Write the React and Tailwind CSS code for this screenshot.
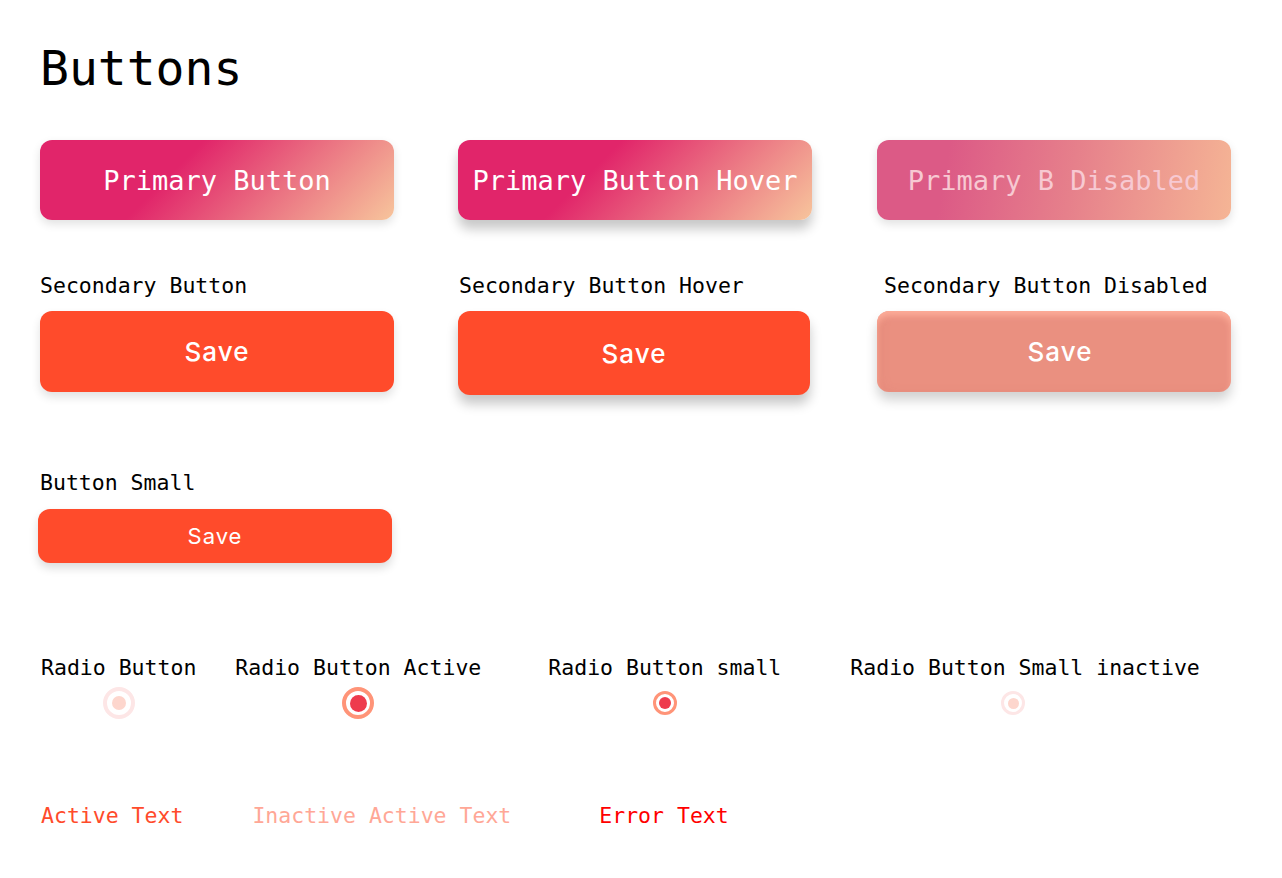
import React from "react";

const mono = "font-['DejaVu_Sans_Mono','Liberation_Mono',monospace]";
const sans = "font-['Inter','Open_Sans',sans-serif]";

const Label = ({ children, className = "" }) => (
  <p className={`${mono} text-[21.5px] leading-[22px] text-black ${className}`}>{children}</p>
);

const PrimaryButton = ({ children, variant }) => {
  const styles = {
    normal:
      "bg-[linear-gradient(135deg,#e1256a_38%,#ea6f81_66%,#f7c59c_100%)] text-white shadow-[0_4px_10px_rgba(0,0,0,0.12)]",
    hover:
      "bg-[linear-gradient(135deg,#e1256a_38%,#ea6f81_66%,#f7c59c_100%)] text-white shadow-[0_9px_12px_rgba(0,0,0,0.22)]",
    disabled:
      "bg-[linear-gradient(100deg,#dc5a86_20%,#e6808b_55%,#f5b595_100%)] text-[#f7c9d2] shadow-[0_4px_10px_rgba(0,0,0,0.12)]",
  };
  return (
    <button
      className={`${mono} ${styles[variant]} flex h-[80px] w-[354px] items-center justify-center rounded-[12px] pt-[2px] text-[27px] whitespace-nowrap`}
    >
      {children}
    </button>
  );
};

const SecondaryButton = ({ variant }) => {
  const styles = {
    normal: "h-[81px] w-[354px] bg-[#ff4b2b] shadow-[0_5px_10px_rgba(0,0,0,0.12)]",
    hover: "h-[84px] w-[352px] bg-[#ff4b2b] shadow-[0_9px_12px_rgba(0,0,0,0.22)]",
    disabled:
      "h-[81px] w-[354px] bg-[#ea9080] pl-[12px] shadow-[inset_0_5px_6px_rgba(255,175,155,0.9),inset_5px_0_8px_rgba(215,120,105,0.2),0_8px_12px_rgba(0,0,0,0.18)]",
  };
  return (
    <button
      className={`${sans} ${styles[variant]} flex items-center justify-center rounded-[12px] text-[26px] font-medium tracking-[1px] text-white`}
    >
      Save
    </button>
  );
};

const Radio = ({ active, small }) => {
  const outer = small ? "h-[24px] w-[24px] border-[3px]" : "h-[32px] w-[32px] border-[4px]";
  const ring = active ? "border-[#ff9478]" : "border-[#fde6e6]";
  const dot = small
    ? active
      ? "h-[12px] w-[12px]"
      : "h-[11px] w-[11px]"
    : active
    ? "h-[17px] w-[17px]"
    : "h-[14px] w-[14px]";
  const dotColor = active ? "bg-[#ee3b4d]" : "bg-[#fdd6cd]";
  return (
    <div className={`${outer} ${ring} flex items-center justify-center rounded-full bg-white`}>
      <div className={`${dot} ${dotColor} rounded-full`} />
    </div>
  );
};

export default function App() {
  return (
    <div className="min-h-screen bg-white px-10 pt-[44px] pb-10">
      <h1 className={`${mono} text-[48px] leading-[48px] font-normal text-black`}>Buttons</h1>

      {/* primary */}
      <div className="mt-[48px] flex items-start gap-x-[64px]">
        <PrimaryButton variant="normal">Primary Button</PrimaryButton>
        <PrimaryButton variant="hover">Primary Button Hover</PrimaryButton>
        <div className="ml-px">
          <PrimaryButton variant="disabled">Primary B Disabled</PrimaryButton>
        </div>
      </div>

      {/* secondary */}
      <div className="mt-[55px] flex items-start gap-x-[64px]">
        <div className="flex w-[354px] flex-col gap-[14px]">
          <Label>Secondary Button</Label>
          <SecondaryButton variant="normal" />
        </div>
        <div className="flex w-[354px] flex-col gap-[14px]">
          <Label className="ml-px">Secondary Button Hover</Label>
          <SecondaryButton variant="hover" />
        </div>
        <div className="ml-px flex w-[354px] flex-col gap-[14px]">
          <Label className="ml-[7px]">Secondary Button Disabled</Label>
          <SecondaryButton variant="disabled" />
        </div>
      </div>

      {/* small */}
      <div className="mt-[77px] flex flex-col gap-[15px]">
        <Label>Button Small</Label>
        <button
          className={`${sans} -ml-[2px] flex h-[54px] w-[354px] items-center justify-center rounded-[12px] bg-[#ff4b2b] text-[22px] tracking-[1px] text-white shadow-[0_5px_10px_rgba(0,0,0,0.14)]`}
        >
          Save
        </button>
      </div>

      {/* radios */}
      <div className="mt-[94px] flex items-start">
        <div className="ml-px flex flex-col items-center gap-[8px]">
          <Label>Radio Button</Label>
          <Radio />
        </div>
        <div className="ml-[39px] flex flex-col items-center gap-[8px]">
          <Label>Radio Button Active</Label>
          <Radio active />
        </div>
        <div className="ml-[67px] flex flex-col items-center gap-[12px]">
          <Label>Radio Button small</Label>
          <Radio active small />
        </div>
        <div className="ml-[69px] flex flex-col items-start gap-[12px]">
          <Label>Radio Button Small inactive</Label>
          <div className="ml-[151px]">
            <Radio small />
          </div>
        </div>
      </div>

      {/* text states */}
      <div className={`${mono} mt-[86px] flex items-start text-[21.5px] leading-[22px]`}>
        <span className="ml-px text-[#ff4b2b]">Active Text</span>
        <span className="ml-[69px] text-[#ffa796]">Inactive Active Text</span>
        <span className="ml-[88px] text-[#ff0000]">Error Text</span>
      </div>
    </div>
  );
}
